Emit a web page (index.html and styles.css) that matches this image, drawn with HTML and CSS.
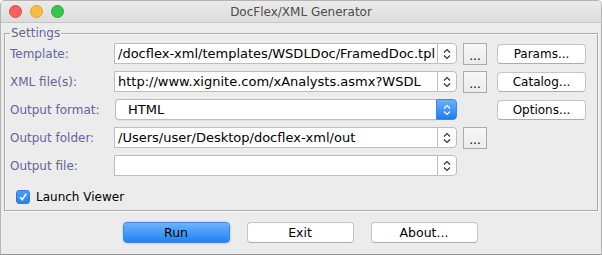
FILE: index.html
```html
<!DOCTYPE html>
<html lang="en">
<head>
    <meta charset="UTF-8">
    <title>DocFlex/XML Generator</title>
    <link rel="stylesheet" href="styles.css">
</head>
<body>
    <div class="window">
        <div class="titlebar">
            <div class="lights">
                <span class="light close"></span>
                <span class="light minimize"></span>
                <span class="light zoom"></span>
            </div>
            <div class="title">DocFlex/XML Generator</div>
        </div>

        <div class="content">
            <fieldset class="settings">
                <legend>Settings</legend>
                <div class="form">
                    <label>Template:</label>
                    <div class="combo">
                        <span class="value">/docflex-xml/templates/WSDLDoc/FramedDoc.tpl</span>
                        <span class="arrows"><svg width="8" height="12" viewBox="0 0 8 12"><path d="M1 4.5L4 1.5L7 4.5M1 7.5L4 10.5L7 7.5"/></svg></span>
                    </div>
                    <button class="dots">...</button>
                    <button class="btn">Params...</button>

                    <label>XML file(s):</label>
                    <div class="combo">
                        <span class="value">http://www.xignite.com/xAnalysts.asmx?WSDL</span>
                        <span class="arrows"><svg width="8" height="12" viewBox="0 0 8 12"><path d="M1 4.5L4 1.5L7 4.5M1 7.5L4 10.5L7 7.5"/></svg></span>
                    </div>
                    <button class="dots">...</button>
                    <button class="btn">Catalog...</button>

                    <label>Output format:</label>
                    <div class="combo select">
                        <span class="value">HTML</span>
                        <span class="arrows"><svg width="8" height="12" viewBox="0 0 8 12"><path d="M1 4.5L4 1.5L7 4.5M1 7.5L4 10.5L7 7.5"/></svg></span>
                    </div>
                    <span></span>
                    <button class="btn">Options...</button>

                    <label>Output folder:</label>
                    <div class="combo">
                        <span class="value">/Users/user/Desktop/docflex-xml/out</span>
                        <span class="arrows"><svg width="8" height="12" viewBox="0 0 8 12"><path d="M1 4.5L4 1.5L7 4.5M1 7.5L4 10.5L7 7.5"/></svg></span>
                    </div>
                    <button class="dots">...</button>
                    <span></span>

                    <label>Output file:</label>
                    <div class="combo">
                        <span class="value"></span>
                        <span class="arrows"><svg width="8" height="12" viewBox="0 0 8 12"><path d="M1 4.5L4 1.5L7 4.5M1 7.5L4 10.5L7 7.5"/></svg></span>
                    </div>
                    <span></span>
                    <span></span>
                </div>

                <label class="check">
                    <span class="box"><svg width="10" height="10" viewBox="0 0 10 10"><path d="M2 5.2L4.2 7.6L8.2 1.8"/></svg></span>
                    Launch Viewer
                </label>
            </fieldset>

            <div class="actions">
                <button class="btn big primary">Run</button>
                <button class="btn big">Exit</button>
                <button class="btn big">About...</button>
            </div>
        </div>
    </div>
</body>
</html>
```

FILE: styles.css
```css
/* General */
body {
    margin: 0;
    background: #ffffff;
    font-family: 'DejaVu Sans', sans-serif;
    font-size: 12px;
    color: #000;
}

.window {
    width: 600px;
    height: 253px;
    border: 1px solid #b4b4b4;
    border-bottom-color: #8e8e8e;
    border-radius: 5px 5px 0 0;
    background: #ececec;
    overflow: hidden;
}

/* Title bar */
.titlebar {
    height: 21px;
    border-bottom: 1px solid #c6c6c6;
    background: linear-gradient(#ebebeb, #dcdcdc);
    display: flex;
    align-items: center;
    position: relative;
}

.lights {
    display: flex;
    gap: 8px;
    padding-left: 8px;
}

.light {
    width: 11px;
    height: 11px;
    border-radius: 50%;
    border: 0.5px solid rgba(0, 0, 0, 0.2);
}

.light.close { background: #fc605c; border-color: #de4a45; }
.light.minimize { background: #fdbc40; border-color: #dea032; }
.light.zoom { background: #34c84a; border-color: #29a73a; }

.title {
    position: absolute;
    left: 0;
    right: 0;
    text-align: center;
    color: #4c4c4c;
    font-size: 12px;
    pointer-events: none;
}

/* Content */
.content {
    padding: 3px 3px 0 3px;
}

.settings {
    margin: 0;
    padding: 3px 10px 6px 5px;
    border: 1px solid #a9a9a9;
    box-shadow: inset 1px 1px 0 #fbfbfb, 1px 1px 0 #fbfbfb;
    min-width: 0;
}

.settings legend {
    padding: 0 1px;
    color: #64649a;
    font-size: 12px;
    line-height: 14px;
}

.form {
    display: grid;
    grid-template-columns: 104px 343px 30px 99px;
    grid-auto-rows: 21px;
    row-gap: 7px;
    align-items: center;
}

.form label {
    color: #64649a;
}

/* Combo boxes */
.combo {
    display: flex;
    height: 21px;
}

.combo .value {
    flex: 1;
    min-width: 0;
    background: #fff;
    border: 1px solid #bdbdbd;
    border-right: none;
    padding-left: 3px;
    font-size: 13px;
    line-height: 19px;
    white-space: nowrap;
    overflow: hidden;
}

.combo .arrows {
    width: 18px;
    background: #fff;
    border: 1px solid #bdbdbd;
    border-radius: 0 4px 4px 0;
    display: flex;
    justify-content: center;
    align-items: center;
}

.combo .arrows svg path {
    fill: none;
    stroke: #333;
    stroke-width: 1.2;
}

.combo.select {
    margin-left: 1px;
}

.combo.select .value {
    border-radius: 4px 0 0 4px;
    padding-left: 12px;
    box-shadow: 0 1px 0 rgba(0, 0, 0, 0.06);
}

.combo.select .arrows {
    width: 19px;
    border: 1px solid #3b87ea;
    background: linear-gradient(#6bb1fa, #1c7ef5);
}

.combo.select .arrows svg path {
    stroke: #fff;
}

/* Buttons */
button {
    font-family: 'DejaVu Sans', sans-serif;
    font-size: 12px;
    color: #000;
    cursor: pointer;
}

.dots {
    justify-self: end;
    width: 24px;
    height: 22px;
    padding: 4px 0 0 0;
    background: linear-gradient(#f7f7f7, #ebebeb);
    border: 1px solid #ababab;
    line-height: 14px;
}

.btn {
    justify-self: end;
    width: 89px;
    height: 20px;
    padding: 0;
    background: #fff;
    border: 1px solid #c4c4c4;
    border-bottom-color: #acacac;
    border-radius: 4px;
    line-height: 18px;
}

/* Checkbox */
.check {
    display: flex;
    align-items: center;
    gap: 6px;
    margin: 14px 0 0 6px;
    font-size: 12px;
}

.check .box {
    width: 14px;
    height: 14px;
    border-radius: 3px;
    background: linear-gradient(#4d9cf8, #2a7ff5);
    border: 0.5px solid #2f78de;
    box-sizing: border-box;
    display: flex;
    justify-content: center;
    align-items: center;
}

.check .box path {
    fill: none;
    stroke: #fff;
    stroke-width: 1.6;
}

/* Bottom buttons */
.actions {
    display: flex;
    justify-content: center;
    gap: 17px;
    margin-top: 11px;
    padding-right: 2px;
}

.btn.big {
    width: 107px;
    height: 21px;
    line-height: 19px;
    font-size: 12.5px;
}

.btn.primary {
    background: linear-gradient(#6db3fb, #1f82f6);
    border-color: #3d86e6;
    box-shadow: 0 0 2px rgba(60, 140, 250, 0.6);
}
```
